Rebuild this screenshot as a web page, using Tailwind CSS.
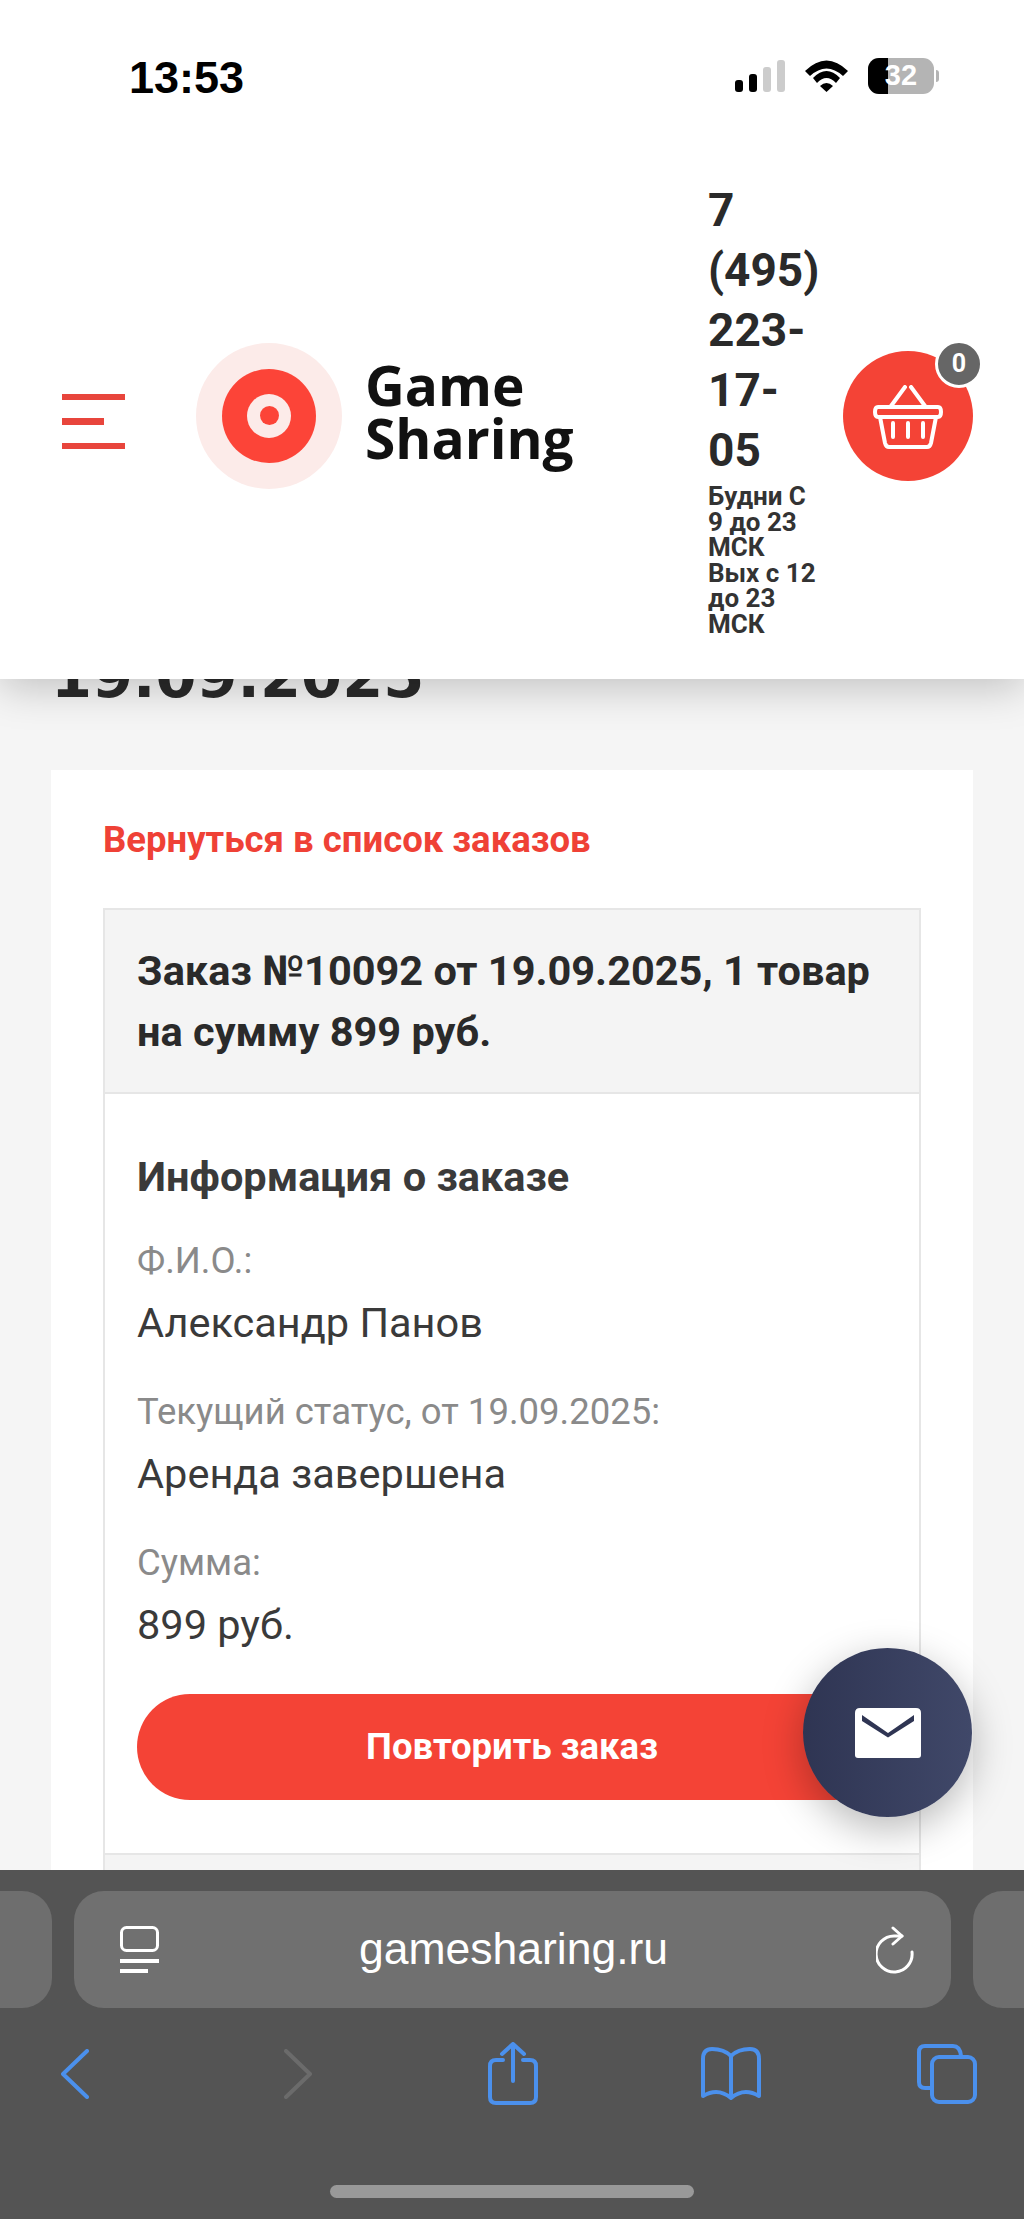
<!DOCTYPE html>
<html lang="ru">
<head>
    <meta charset="UTF-8">
    <meta name="viewport" content="width=device-width, initial-scale=1.0">
    <title>Game Sharing</title>
    <script src="https://cdn.jsdelivr.net/npm/@tailwindcss/browser@4"></script>
</head>

<body class="bg-[#f5f5f5]">
<div class="relative w-[1024px] h-[2219px] overflow-hidden flex flex-col font-['Roboto',sans-serif]">

    <!-- header -->
    <header class="relative z-10 h-[679px] shrink-0 bg-white shadow-[0_8px_40px_rgba(0,0,0,0.22)]">
        <div class="h-[152px] flex justify-between items-start pt-[55px] pl-[129px] pr-[85px]">
            <span class="font-['Liberation_Sans',sans-serif] font-bold text-[45px] leading-[45px] text-black">13:53</span>
            <div class="flex items-center gap-[20px] pt-[3px]">
                <svg width="50" height="32" viewBox="0 0 50 32">
                    <rect x="0" y="20" width="8" height="12" rx="3" fill="#000"/>
                    <rect x="14" y="14" width="8" height="18" rx="3" fill="#000"/>
                    <rect x="28" y="7" width="8" height="25" rx="3" fill="#ccc"/>
                    <rect x="42" y="0" width="8" height="32" rx="3" fill="#ccc"/>
                </svg>
                <svg width="43" height="32" viewBox="0 0 43 32" fill="#000">
                    <path d="M0 11 Q21.500 -10 43 11 L38 16 Q21.500 1 5 16 Z"/>
                    <path d="M8 18 Q21.500 4 35 18 L31 23 Q21.500 13 12 23 Z"/>
                    <path d="M15 26 Q21.500 20 28 26 L21.500 32 Z"/>
                </svg>
                <div class="flex items-center gap-[2px]">
                    <div class="relative w-[66px] h-[36px] rounded-[11px] overflow-hidden bg-[#b4b4b4] flex items-center justify-center">
                        <div class="absolute left-0 top-0 bottom-0 w-[20px] bg-black"></div>
                        <span class="relative font-['Liberation_Sans',sans-serif] font-bold text-[29px] text-white">32</span>
                    </div>
                    <div class="w-[3px] h-[12px] rounded-r-full bg-[#b4b4b4]"></div>
                </div>
            </div>
        </div>

        <div class="h-[527px] flex items-center">
            <!-- menu -->
            <div class="ml-[62px] mt-[12px] w-[63px] flex flex-col gap-[18px]">
                <div class="h-[6px] w-full bg-[#e8453c]"></div>
                <div class="h-[7px] w-[42px] bg-[#e8453c]"></div>
                <div class="h-[6px] w-full bg-[#e8453c]"></div>
            </div>
            <!-- logo -->
            <div class="ml-[71px] w-[146px] h-[146px] rounded-full bg-[#fcebe9] flex items-center justify-center">
                <div class="w-[94px] h-[94px] rounded-full bg-[#fc4438] flex items-center justify-center">
                    <div class="w-[44px] h-[44px] rounded-full bg-[#fcebe9] flex items-center justify-center">
                        <div class="w-[19px] h-[19px] rounded-full bg-[#fc4438]"></div>
                    </div>
                </div>
            </div>
            <div class="ml-[23px] w-[223px] mt-[-9px] font-['Open_Sans',sans-serif] font-bold text-[55px] leading-[53px] text-[#111]">Game<br>Sharing</div>
            <!-- phone -->
            <div class="ml-[120px] w-[113px] mb-[14px] text-[#2a2a2a] font-bold">
                <div class="text-[46px] leading-[60px]">7 (495) 223-17-05</div>
                <div class="mt-[4px] text-[26px] leading-[25.500px] text-[#333]">Будни С 9 до 23 МСК<br>Вых с 12 до 23 МСК</div>
            </div>
            <!-- cart -->
            <div class="relative ml-[22px] w-[130px] h-[130px] rounded-full bg-[#f44336] flex items-center justify-center">
                <svg class="mt-[3px]" width="70" height="64" viewBox="0 0 70 64" fill="none" stroke="#fff" stroke-width="4" stroke-linecap="round" stroke-linejoin="round">
                    <path d="M18 21 L32 2 M38 2 L52 21"/>
                    <path d="M5 22 H65 Q68 22 68 27 Q68 32 65 32 H5 Q2 32 2 27 Q2 22 5 22 Z"/>
                    <path d="M7 32 L12 58 Q13 62 16 62 H54 Q57 62 58 58 L63 32"/>
                    <path d="M20 38 V52 M35 38 V52 M50 38 V52"/>
                </svg>
                <div class="absolute right-[-10px] top-[-11px] w-[48px] h-[48px] rounded-full bg-[#666] border-[3px] border-white flex items-center justify-center text-white font-bold text-[25px]">0</div>
            </div>
        </div>
    </header>

    <!-- page -->
    <main class="flex-1 min-h-0 overflow-hidden px-[51px]">
        <h1 class="-mt-[32px] mb-[63px] font-['DejaVu_Sans',sans-serif] font-bold text-[59px] leading-[60px] text-[#2a2a2a]">19.09.2025</h1>
        <div class="bg-white pt-[50px] px-[52px] pb-[40px]">
            <a class="block text-[36.500px] leading-[40px] font-bold text-[#ef4136]">Вернуться в список заказов</a>
            <div class="mt-[48px] border-2 border-[#e6e6e6]">
                <div class="bg-[#f4f4f4] border-b-2 border-[#e6e6e6] pt-[30px] pb-[30px] px-[32px] text-[41.500px] leading-[61px] font-bold text-[#2a2a2a]">Заказ №10092 от 19.09.2025, 1 товар на сумму 899 руб.</div>
                <div class="pt-[58px] pb-[53px] px-[32px] border-b-2 border-[#e6e6e6]">
                    <h2 class="text-[41.500px] leading-[50px] font-bold text-[#3a3a3a]">Информация о заказе</h2>
                    <div class="mt-[39px] flex flex-col gap-[44px]">
                        <div class="flex flex-col gap-[17px]">
                            <div class="text-[36.500px] leading-[40px] text-[#8a8a8a]">Ф.И.О.:</div>
                            <div class="text-[41.500px] leading-[50px] text-[#3a3a3a]">Александр Панов</div>
                        </div>
                        <div class="flex flex-col gap-[17px]">
                            <div class="text-[36.500px] leading-[40px] text-[#8a8a8a]">Текущий статус, от 19.09.2025:</div>
                            <div class="text-[41.500px] leading-[50px] text-[#3a3a3a]">Аренда завершена</div>
                        </div>
                        <div class="flex flex-col gap-[17px]">
                            <div class="text-[36.500px] leading-[40px] text-[#8a8a8a]">Сумма:</div>
                            <div class="text-[41.500px] leading-[50px] text-[#3a3a3a]">899 руб.</div>
                        </div>
                    </div>
                    <button class="mt-[44px] w-full h-[106px] rounded-full bg-[#f44336] text-white font-bold text-[36.500px]">Повторить заказ</button>
                </div>
                <div class="h-[200px] bg-[#f4f4f4]"></div>
            </div>
        </div>
    </main>

    <!-- mail button -->
    <div class="absolute z-20 left-[803px] top-[1648px] w-[169px] h-[169px] rounded-full bg-gradient-to-r from-[#2f3553] to-[#404869] shadow-[0_12px_40px_rgba(0,0,0,0.28)] flex items-center justify-center">
        <svg width="66" height="50" viewBox="0 0 66 50">
            <path d="M5 0 H61 Q66 0 66 5 V47 Q66 50 63 50 H3 Q0 50 0 47 V5 Q0 0 5 0 Z" fill="#fff"/>
            <path d="M7 7 L33 25 L59 7 V13 L33 29.500 L7 13 Z" fill="#2f3553"/>
        </svg>
    </div>

    <!-- safari toolbar -->
    <footer class="relative z-30 h-[349px] shrink-0 bg-[#545454]">
        <div class="pt-[21px] flex gap-[22px] ml-[-878px]">
            <div class="w-[930px] h-[117px] shrink-0 rounded-[30px] bg-[#6e6e6e]"></div>
            <div class="w-[877px] h-[117px] shrink-0 rounded-[30px] bg-[#707070] flex items-center justify-between pl-[46px] pr-[37px]">
                <svg width="39" height="47" viewBox="0 0 39 47" fill="none" stroke="#fff">
                    <rect x="1.500" y="1.500" width="36" height="23" rx="5" stroke-width="3"/>
                    <path d="M0 35 H39" stroke-width="4"/>
                    <path d="M0 45 H28" stroke-width="4"/>
                </svg>
                <span class="-ml-[8px] font-['Liberation_Sans',sans-serif] text-[44.500px] text-white">gamesharing.ru</span>
                <svg width="38" height="48" viewBox="0 0 38 48" fill="none" stroke="#fff" stroke-width="3" stroke-linecap="round" stroke-linejoin="round">
                    <path d="M26 10 H18 A18 18 0 1 0 36 26"/>
                    <path d="M17 2 L26 10 L17 18"/>
                </svg>
            </div>
            <div class="w-[300px] h-[117px] shrink-0 rounded-[30px] bg-[#6e6e6e]"></div>
        </div>

        <div class="relative h-[70px] mt-[31px] flex items-center">
            <svg class="ml-[61px]" width="28" height="50" viewBox="0 0 28 50" fill="none" stroke="#4b90ec" stroke-width="4" stroke-linecap="round" stroke-linejoin="round"><path d="M26 2 L2 25 L26 48"/></svg>
            <svg class="ml-[195px]" width="28" height="50" viewBox="0 0 28 50" fill="none" stroke="#6b6b6b" stroke-width="4" stroke-linecap="round" stroke-linejoin="round"><path d="M2 2 L26 25 L2 48"/></svg>
            <svg class="ml-[176px]" width="50" height="64" viewBox="0 0 50 64" fill="none" stroke="#4b90ec" stroke-width="4" stroke-linecap="round" stroke-linejoin="round">
                <path d="M15 18 H8 Q2 18 2 24 V55 Q2 61 8 61 H42 Q48 61 48 55 V24 Q48 18 42 18 H35"/>
                <path d="M25 39 V3 M14 12 L25 2 L36 12"/>
            </svg>
            <svg class="ml-[162px]" width="62" height="54" viewBox="0 0 62 54" fill="none" stroke="#4b90ec" stroke-width="4" stroke-linecap="round" stroke-linejoin="round">
                <path d="M31 9 Q24 2 12 2 Q3 2 3 12 V49 Q18 40 31 51 Q44 40 59 49 V12 Q59 2 50 2 Q38 2 31 9 V51"/>
            </svg>
            <svg class="ml-[155px]" width="60" height="60" viewBox="0 0 60 60" fill="none" stroke="#4b90ec" stroke-width="4" stroke-linejoin="round">
                <path d="M14 44 H8 Q2 44 2 38 V8 Q2 2 8 2 H36 Q43 2 44 12"/>
                <rect x="15" y="13" width="43" height="45" rx="7"/>
            </svg>
        </div>
        <div class="absolute left-[330px] top-[315px] w-[364px] h-[13px] rounded-full bg-[#999]"></div>
    </footer>
</div>
</body>
</html>
